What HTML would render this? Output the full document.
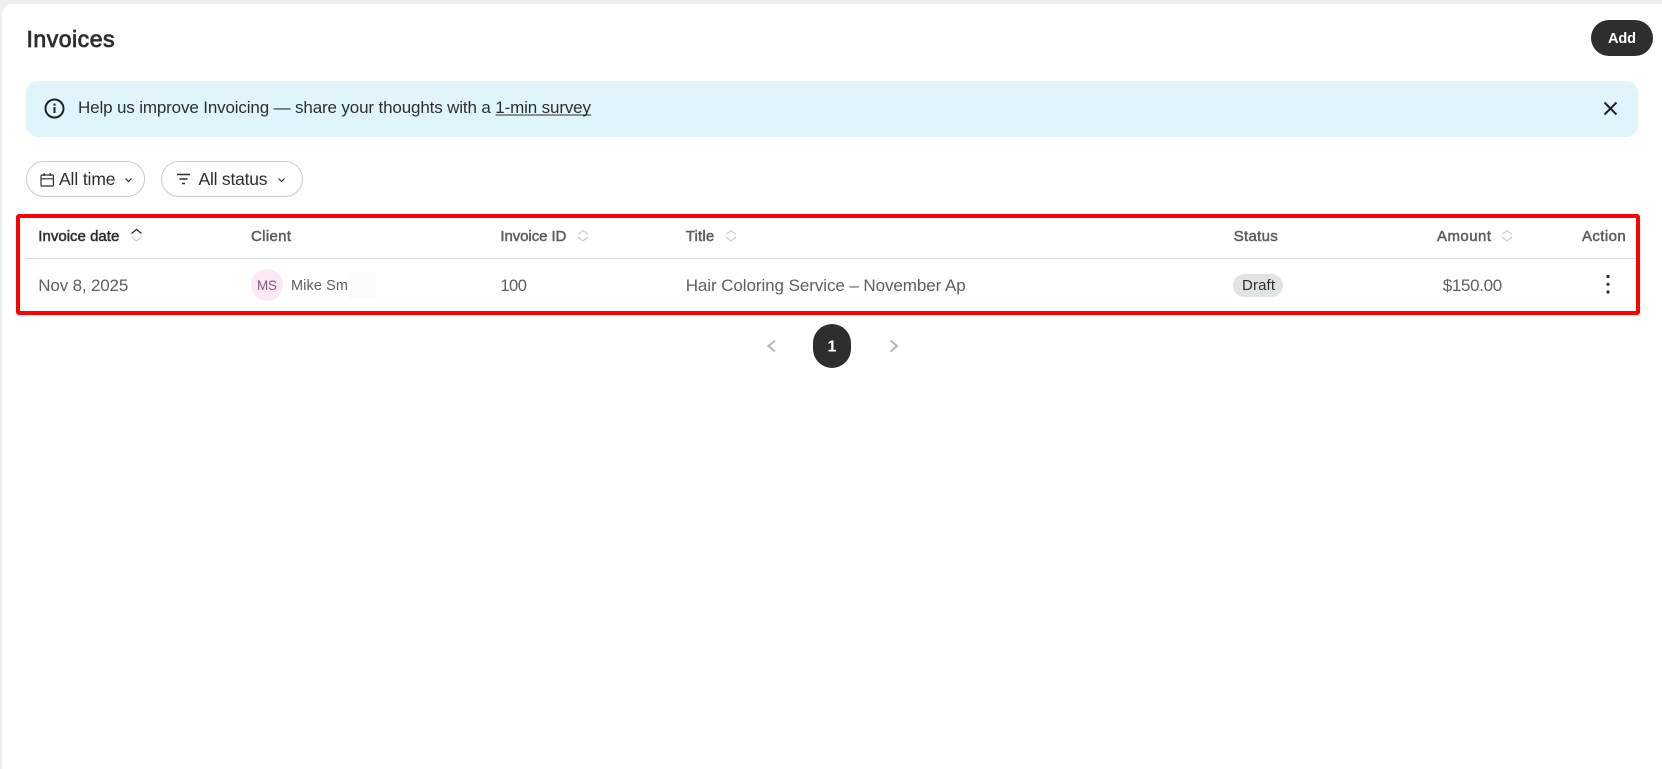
<!DOCTYPE html>
<html lang="en">
<head>
<meta charset="utf-8">
<title>Invoices</title>
<style>
html,body{margin:0;padding:0;width:1662px;height:769px;overflow:hidden;background:#eef0ef}
#card{position:absolute;left:2px;top:4px;width:1660px;height:765px;background:#fff;border-top-left-radius:10px}
#s{position:absolute;left:0;top:0}
text{font-family:"Liberation Sans",Arial,sans-serif;white-space:pre}
.h{font-size:15px;fill:#5a5f5e;stroke:#5a5f5e;stroke-width:.5px}
.r{font-size:17px;fill:#5c6160}
</style>
</head>
<body>
<div id="card"></div>
<svg id="s" width="1662" height="769" viewBox="0 0 1662 769" xmlns="http://www.w3.org/2000/svg">
  <text x="26.5" y="47" font-size="23" fill="#2c2f2e" stroke="#2c2f2e" stroke-width=".8" textLength="88">Invoices</text>

  <rect x="1591" y="20" width="62" height="36" rx="18" fill="#2c2f2e"/>
  <text x="1608" y="43" font-size="14.5" font-weight="bold" fill="#fff" textLength="28">Add</text>

  <rect x="26" y="81" width="1612" height="56" rx="12" fill="#e0f4fc"/>
  <circle cx="54.5" cy="108.5" r="9" fill="none" stroke="#1f2322" stroke-width="2"/>
  <rect x="53.5" y="107" width="2" height="6" fill="#1f2322"/>
  <rect x="53.5" y="103.5" width="2" height="2.2" fill="#1f2322"/>
  <text x="78" y="113" font-size="17" fill="#2c2f2e" textLength="513">Help us improve Invoicing — share your thoughts with a 1-min survey</text>
  <rect x="495.5" y="114.5" width="95.5" height="1" fill="#2c2f2e"/>
  <path d="M1604.5 102.5L1616.5 114.5M1616.5 102.5L1604.5 114.5" stroke="#1f2322" stroke-width="2" fill="none"/>

  <rect x="26.5" y="161.5" width="118" height="35" rx="17.5" fill="#fff" stroke="#c9cbca"/>
  <rect x="161.5" y="161.5" width="141" height="35" rx="17.5" fill="#fff" stroke="#c9cbca"/>
  <g fill="none" stroke="#2c2f2e" stroke-width="1.2">
    <rect x="41" y="175" width="12.4" height="11" rx="1"/>
    <path d="M41 178.8H53.4M44.2 173V176M50.2 173V176"/>
    <path d="M125.5 178.5L128.5 181.5L131.5 178.5"/>
    <path d="M278.5 178.5L281.5 181.5L284.5 178.5"/>
    <path d="M177 174.5H190M179.5 179H187.5M182 183.5H185" stroke-width="1.4"/>
  </g>
  <text x="59" y="185" font-size="17.5" fill="#2c2f2e" textLength="56.5">All time</text>
  <text x="198.5" y="185" font-size="17.5" fill="#2c2f2e" textLength="69">All status</text>

  <rect x="18" y="216" width="1620" height="97" rx="1" fill="#fff" stroke="#ff0000" stroke-width="4"/>
  <rect x="26" y="258" width="1610" height="1" fill="#dcdedd"/>

  <text class="h" x="38.3" y="241" style="fill:#2c2f2e;stroke:#2c2f2e" textLength="81">Invoice date</text>
  <text class="h" x="251" y="241" textLength="40">Client</text>
  <text class="h" x="500.4" y="241" textLength="66">Invoice ID</text>
  <text class="h" x="685.7" y="241" textLength="28.5">Title</text>
  <text class="h" x="1233.7" y="241" textLength="44">Status</text>
  <text class="h" x="1437" y="241" textLength="54">Amount</text>
  <text class="h" x="1582" y="241" textLength="43.7">Action</text>

  <path d="M131.5 233.5L136.5 229.5L141.5 233.5" fill="none" stroke="#2c2f2e" stroke-width="1.3"/>
  <path d="M131.5 237L136.5 241L141.5 237" fill="none" stroke="#c2c5c4" stroke-width="1"/>
  <g fill="none" stroke="#c2c5c4" stroke-width="1">
    <path d="M578 234.5L583 230.5L588 234.5M578 237L583 241L588 237"/>
    <path d="M726 234.5L731 230.5L736 234.5M726 237L731 241L736 237"/>
    <path d="M1502 234.5L1507 230.5L1512 234.5M1502 237L1507 241L1512 237"/>
  </g>

  <text class="r" x="38.3" y="291" textLength="90">Nov 8, 2025</text>
  <circle cx="267" cy="285" r="16" fill="#fce8f6"/>
  <text x="257" y="290" font-size="13.5" fill="#7d5c78" textLength="20">MS</text>
  <text x="291" y="290" font-size="14.5" fill="#5c6160" textLength="57">Mike Sm</text>
  <rect x="348" y="272" width="28" height="27" fill="#fbfbfb"/>
  <text x="500.4" y="291" font-size="16.5" fill="#5c6160" textLength="26.5">100</text>
  <text class="r" x="685.7" y="291" textLength="280">Hair Coloring Service – November Ap</text>
  <rect x="1233" y="274" width="50" height="23" rx="11.5" fill="#dfe3e3"/>
  <text x="1242" y="290" font-size="15" fill="#2c2f2e" textLength="33">Draft</text>
  <text class="r" x="1442.7" y="291" textLength="59.5">$150.00</text>
  <circle cx="1608" cy="276.5" r="1.6" fill="#2c2f2e"/>
  <circle cx="1608" cy="284.3" r="1.6" fill="#2c2f2e"/>
  <circle cx="1608" cy="292" r="1.6" fill="#2c2f2e"/>

  <path d="M775 340.5L768.5 346L775 351.5" fill="none" stroke="#b5b8b7" stroke-width="2.1"/>
  <rect x="813" y="324" width="38" height="44" rx="19" fill="#2c2f2e"/>
  <text x="827.5" y="351.5" font-size="16" font-weight="bold" fill="#fff">1</text>
  <path d="M890.5 340.5L897 346L890.5 351.5" fill="none" stroke="#b5b8b7" stroke-width="2.1"/>
</svg>
</body>
</html>
